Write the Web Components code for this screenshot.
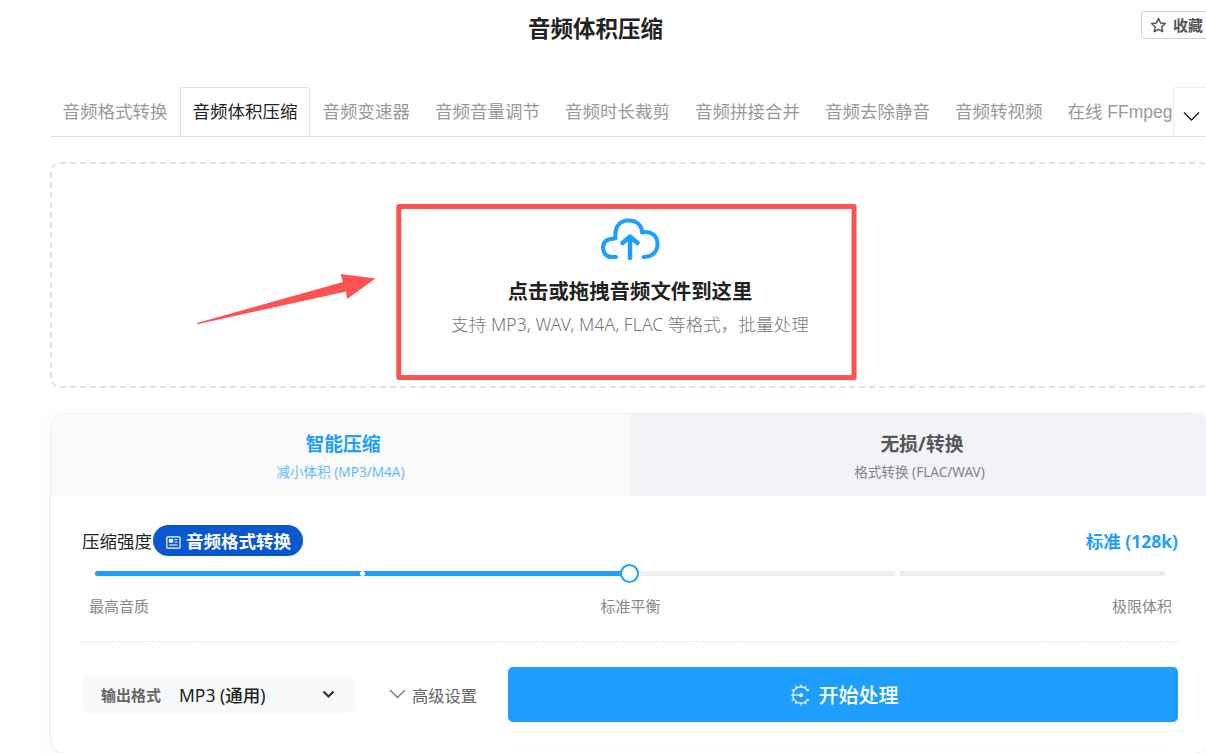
<!DOCTYPE html>
<html lang="zh-CN">
<head>
<meta charset="utf-8">
<title>音频体积压缩</title>
<style>
    html, body {
        margin: 0;
        height: 753px;
        overflow: hidden;
        background: #fff;
    }
    body {
        font-family: "Noto Sans", "Noto Sans CJK SC", sans-serif;
        color: #222;
        --blue: #1e9fff;
        --line: #e2e2e2;
        --red: #fb5252;
    }
</style>
</head>
<body>
<audio-page></audio-page>

<script>
"use strict";

function mount(el, html) {
    el.attachShadow({ mode: "open" }).innerHTML = html;
}

class AudioPage extends HTMLElement {
    constructor() {
        super();
        mount(this, `
            <style>
                :host {
                    display: flex;
                    flex-direction: column;
                    position: relative;
                    box-sizing: border-box;
                    width: 1210px;
                    padding-left: 50px;
                }
                upload-zone { margin-top: 25px; }
                compress-panel { margin-top: 25px; }
                mark-overlay { position: absolute; left: 0; top: 0; }
            </style>
            <page-header>音频体积压缩</page-header>
            <tool-tabs active="1"></tool-tabs>
            <upload-zone>
                <span slot="title">点击或拖拽音频文件到这里</span>
                <span slot="hint">支持 MP3, WAV, M4A, FLAC 等格式，批量处理</span>
            </upload-zone>
            <compress-panel></compress-panel>
            <mark-overlay></mark-overlay>
        `);
    }
}

class PageHeader extends HTMLElement {
    constructor() {
        super();
        mount(this, `
            <style>
                :host {
                    display: grid;
                    grid-template-columns: 1fr 136px 1fr;
                    height: 87px;
                    margin-right: 68px;
                    align-items: start;
                }
                h1 {
                    grid-column: 2;
                    margin: 12px 0 0;
                    font-size: 22.5px;
                    line-height: 34px;
                    font-weight: 700;
                    white-space: nowrap;
                }
                fav-button { justify-self: end; margin: 11px -78px 0 0; }
            </style>
            <h1><slot></slot></h1>
            <fav-button>收藏</fav-button>
        `);
    }
}

class FavButton extends HTMLElement {
    constructor() {
        super();
        mount(this, `
            <style>
                :host {
                    display: flex;
                    align-items: center;
                    box-sizing: border-box;
                    width: 79px;
                    height: 28px;
                    padding-left: 8px;
                    gap: 6px;
                    border: 1px solid #d2d2d2;
                    border-radius: 3px;
                    color: #555;
                    font-size: 15px;
                    font-weight: 700;
                    line-height: 26px;
                    white-space: nowrap;
                }
                svg { flex: none; }
            </style>
            <svg width="17" height="17" viewBox="0 0 17 17" fill="none" stroke="currentColor" stroke-width="1.5" stroke-linejoin="round">
                <path d="M8.5 1.6l2 4.3 4.9.6-3.6 3.3.9 4.9-4.2-2.4-4.2 2.4.9-4.9L1.6 6.500l4.900-.6z"/>
            </svg>
            <slot></slot>
        `);
    }
}

class ToolTabs extends HTMLElement {
    constructor() {
        super();
        this.names = ["音频格式转换", "音频体积压缩", "音频变速器", "音频音量调节", "音频时长裁剪",
            "音频拼接合并", "音频去除静音", "音频转视频", "在线 FFmpeg"];
    }
    connectedCallback() {
        const active = Number(this.getAttribute("active"));
        const items = this.names.map((name, idx) =>
            `<span class="tab${idx === active ? " on" : ""}">${name}</span>`).join("");
        mount(this, `
            <style>
                :host {
                    display: flex;
                    box-sizing: border-box;
                    height: 50px;
                    border-bottom: 1px solid var(--line);
                }
                .list {
                    display: flex;
                    flex: 1;
                    min-width: 0;
                    overflow: hidden;
                }
                .tab {
                    flex: none;
                    box-sizing: border-box;
                    padding: 0 12.5px;
                    font-family: "Liberation Sans", "Noto Sans CJK SC", sans-serif;
                    font-size: 17.5px;
                    line-height: 51px;
                    height: 49px;
                    color: #999;
                    white-space: nowrap;
                }
                .tab.on {
                    color: #222;
                    padding: 0 11.5px;
                    line-height: 49px;
                    border: 1px solid var(--line);
                    border-bottom: 0;
                    border-radius: 2px 2px 0 0;
                }
                .more {
                    flex: none;
                    box-sizing: border-box;
                    width: 37px;
                    border: 1px solid #eee;
                    border-bottom: 0;
                    border-radius: 2px 2px 0 0;
                    padding: 23px 0 0 9px;
                }
                svg { display: block; }
            </style>
            <div class="list">${items}</div>
            <div class="more">
                <svg width="17" height="11" viewBox="0 0 17 11" fill="none" stroke="#222" stroke-width="1.5">
                    <path d="M1 1.5l7.5 7.5 7.5-7.5"/>
                </svg>
            </div>
        `);
    }
}

class UploadZone extends HTMLElement {
    constructor() {
        super();
        mount(this, `
            <style>
                :host {
                    display: flex;
                    flex-direction: column;
                    align-items: center;
                    box-sizing: border-box;
                    height: 226px;
                    padding-top: 53px;
                    border: 2px dashed #e2e2e2;
                    border-radius: 10px;
                }
                .title {
                    margin-top: 13px;
                    font-size: 20.4px;
                    font-weight: 700;
                    line-height: 34px;
                }
                .hint {
                    font-size: 17.5px;
                    line-height: 32px;
                    font-weight: 300;
                    color: #777;
                    letter-spacing: .11px;
                }
            </style>
            <svg width="60" height="44" viewBox="0 0 60 44" fill="none" stroke="#1e9fff" stroke-width="4" stroke-linecap="round" stroke-linejoin="round">
                <path d="M16 40h-4.5C6 40 3 35.5 3 30.5 3 25 7 21.5 15.5 21.500C14 11 19 3.500 28.500 3.500C37 3.500 42 8.500 42 15.500C51 13.500 57.500 18.500 57.500 27C57.500 35 52 40 43.500 40"/>
                <path d="M30 41V20M22.5 26l7.500-6.500 7.500 6.500" stroke-width="4.5"/>
            </svg>
            <div class="title"><slot name="title"></slot></div>
            <div class="hint"><slot name="hint"></slot></div>
        `);
    }
}

class CompressPanel extends HTMLElement {
    constructor() {
        super();
        mount(this, `
            <style>
                :host {
                    display: block;
                    box-sizing: border-box;
                    height: 341px;
                    border: 1px solid #eee;
                    border-radius: 15px;
                    overflow: hidden;
                    box-shadow: 0 5px 25px rgba(0, 0, 0, .04);
                    background: #fff;
                }
                .modes { display: flex; height: 82px; }
                mode-tab { flex: 1; }
                .body { padding: 29px 31px 0; }
                .head {
                    display: flex;
                    align-items: center;
                    height: 31px;
                    font-size: 17.5px;
                    white-space: nowrap;
                }
                tool-pill { margin-left: 1px; }
                .value {
                    margin-left: auto;
                    font-weight: 700;
                    color: var(--blue);
                }
                .actions {
                    display: flex;
                    align-items: center;
                    height: 55px;
                    margin-top: 25px;
                }
                .advanced {
                    display: flex;
                    align-items: center;
                    width: 89px;
                    margin: 0 30px 0 33px;
                    gap: 6px;
                    font-size: 16.25px;
                    color: #666;
                    white-space: nowrap;
                }
                .advanced svg { flex: none; margin-top: -1px; }
                start-button { flex: 1; }
            </style>
            <div class="modes">
                <mode-tab selected>智能压缩<span slot="sub">减小体积 (MP3/M4A)</span></mode-tab>
                <mode-tab>无损/转换<span slot="sub">格式转换 (FLAC/WAV)</span></mode-tab>
            </div>
            <div class="body">
                <div class="head">
                    <span>压缩强度</span>
                    <tool-pill>音频格式转换</tool-pill>
                    <span class="value">标准 (128k)</span>
                </div>
                <level-slider></level-slider>
                <div class="actions">
                    <format-select label="输出格式">MP3 (通用)</format-select>
                    <div class="advanced">
                        <svg width="17" height="10" viewBox="0 0 17 10" fill="none" stroke="#777" stroke-width="1.4">
                            <path d="M1 1l7.5 7.5L16 1"/>
                        </svg>
                        <span>高级设置</span>
                    </div>
                    <start-button>开始处理</start-button>
                </div>
            </div>
        `);
    }
}

class ModeTab extends HTMLElement {
    constructor() {
        super();
        mount(this, `
            <style>
                :host {
                    display: flex;
                    flex-direction: column;
                    align-items: center;
                    background: #f2f3f7;
                    color: #555;
                }
                :host([selected]) {
                    background: #fafafa;
                    color: var(--blue);
                }
                .name {
                    margin-top: 15px;
                    padding-left: 5px;
                    font-size: 18.75px;
                    font-weight: 700;
                    line-height: 30px;
                }
                .sub {
                    font-size: 13.6px;
                    line-height: 26px;
                    opacity: .7;
                    white-space: nowrap;
                }
            </style>
            <div class="name"><slot></slot></div>
            <div class="sub"><slot name="sub"></slot></div>
        `);
    }
}

class ToolPill extends HTMLElement {
    constructor() {
        super();
        mount(this, `
            <style>
                :host {
                    display: flex;
                    align-items: center;
                    box-sizing: border-box;
                    height: 31px;
                    width: 150px;
                    padding-left: 13px;
                    gap: 5px;
                    border-radius: 16px;
                    background: #0b57d0;
                    color: #fff;
                    font-weight: 700;
                    line-height: 31px;
                }
                svg { flex: none; margin-top: 4px; }
                span { padding-top: 2px; }
            </style>
            <svg width="15" height="13" viewBox="0 0 15 13" fill="none" stroke="#fff" stroke-width="1.2">
                <rect x=".8" y=".8" width="13.2" height="11.4" rx="1"/>
                <rect x="3.5" y="3.5" width="3" height="2.5" fill="#fff"/>
                <path d="M8.5 3.5h3M8.5 6h3M3 9h8.500"/>
            </svg>
            <span><slot></slot></span>
        `);
    }
}

class LevelSlider extends HTMLElement {
    constructor() {
        super();
        mount(this, `
            <style>
                :host {
                    display: block;
                    height: 85px;
                    border-bottom: 1px dashed #e8e8e8;
                    font-size: 15px;
                    color: #888;
                }
                .track {
                    position: relative;
                    height: 5px;
                    margin: 0 13px;
                    top: 15px;
                    border-radius: 3px;
                    background: #eee;
                }
                .fill {
                    width: 50%;
                    height: 5px;
                    border-radius: 3px;
                    background: var(--blue);
                }
                i {
                    position: absolute;
                    top: 0;
                    width: 5px;
                    height: 5px;
                    margin-left: -3px;
                    border-radius: 50%;
                    background: #fff;
                }
                b {
                    position: absolute;
                    left: 50%;
                    top: -7px;
                    box-sizing: border-box;
                    width: 19px;
                    height: 19px;
                    margin-left: -10px;
                    border: 2px solid var(--blue);
                    border-radius: 50%;
                    background: #fff;
                }
                .labels {
                    display: flex;
                    justify-content: space-between;
                    margin: 34px 6px 0 7px;
                    line-height: 22px;
                }
            </style>
            <div class="track">
                <div class="fill"></div>
                <i style="left: 25%"></i>
                <i style="left: 75%"></i>
                <b></b>
            </div>
            <div class="labels"><span>最高音质</span><span>标准平衡</span><span>极限体积</span></div>
        `);
    }
}

class FormatSelect extends HTMLElement {
    connectedCallback() {
        mount(this, `
            <style>
                :host {
                    display: flex;
                    align-items: center;
                    box-sizing: border-box;
                    width: 274px;
                    height: 37px;
                    padding: 0 21px 0 19px;
                    border-radius: 8px;
                    background: #f8f9fb;
                    font-size: 17.5px;
                    font-weight: 450;
                    white-space: nowrap;
                }
                label {
                    width: 78px;
                    font-size: 15px;
                    font-weight: 700;
                    color: #666;
                }
                svg { margin: -1px 0 0 auto; }
            </style>
            <label>${this.getAttribute("label")}</label>
            <slot></slot>
            <svg width="13" height="9" viewBox="0 0 13 9" fill="none" stroke="#333" stroke-width="2.2">
                <path d="M1.5 1.5l5 5 5-5"/>
            </svg>
        `);
    }
}

class StartButton extends HTMLElement {
    constructor() {
        super();
        mount(this, `
            <style>
                :host {
                    display: flex;
                    align-items: center;
                    justify-content: center;
                    box-sizing: border-box;
                    height: 55px;
                    padding-left: 2px;
                    gap: 8px;
                    border-radius: 5px;
                    background: var(--blue);
                    color: #fff;
                    font-size: 20px;
                    font-weight: 500;
                    line-height: 55px;
                }
                span { padding-top: 2px; }
            </style>
            <svg width="21" height="22" viewBox="0 0 21 22" fill="none" stroke="#fff" stroke-width="1.2">
                <path d="M17.5 6.2A8.2 8.2 0 1 0 17.5 15.8"/>
                <path d="M1 11h9"/>
                <circle cx="11" cy="11" r="1.3" fill="#fff"/>
                <path d="M11 3V.6M6.7 4L5.5 1.9M3.8 6.8L1.7 5.6M3.8 15.2l-2.1 1.2M6.7 18l-1.2 2.1M11 19v2.4M15 4l1.2-2M15 18l1.2 2M16.8 7l2.4-1.3M16.8 15l2.4 1.3"/>
            </svg>
            <span><slot></slot></span>
        `);
    }
}

// Red arrow and frame that point at the upload area
class MarkOverlay extends HTMLElement {
    constructor() {
        super();
        mount(this, `
            <style>
                :host { display: block; pointer-events: none; }
                svg { display: block; }
            </style>
            <svg width="900" height="400" viewBox="0 0 900 400" fill="var(--red)">
                <path d="M197 323L343 282 340.5 274 375.5 278.5 347 299 346 291.500L197.500 324.200z"/>
                <rect x="398.8" y="206.5" width="455.200" height="171" fill="none" stroke="var(--red)" stroke-width="5" stroke-linejoin="round"/>
            </svg>
        `);
    }
}

customElements.define("fav-button", FavButton);
customElements.define("page-header", PageHeader);
customElements.define("tool-tabs", ToolTabs);
customElements.define("upload-zone", UploadZone);
customElements.define("mode-tab", ModeTab);
customElements.define("tool-pill", ToolPill);
customElements.define("level-slider", LevelSlider);
customElements.define("format-select", FormatSelect);
customElements.define("start-button", StartButton);
customElements.define("compress-panel", CompressPanel);
customElements.define("mark-overlay", MarkOverlay);
customElements.define("audio-page", AudioPage);
</script>
</body>
</html>
